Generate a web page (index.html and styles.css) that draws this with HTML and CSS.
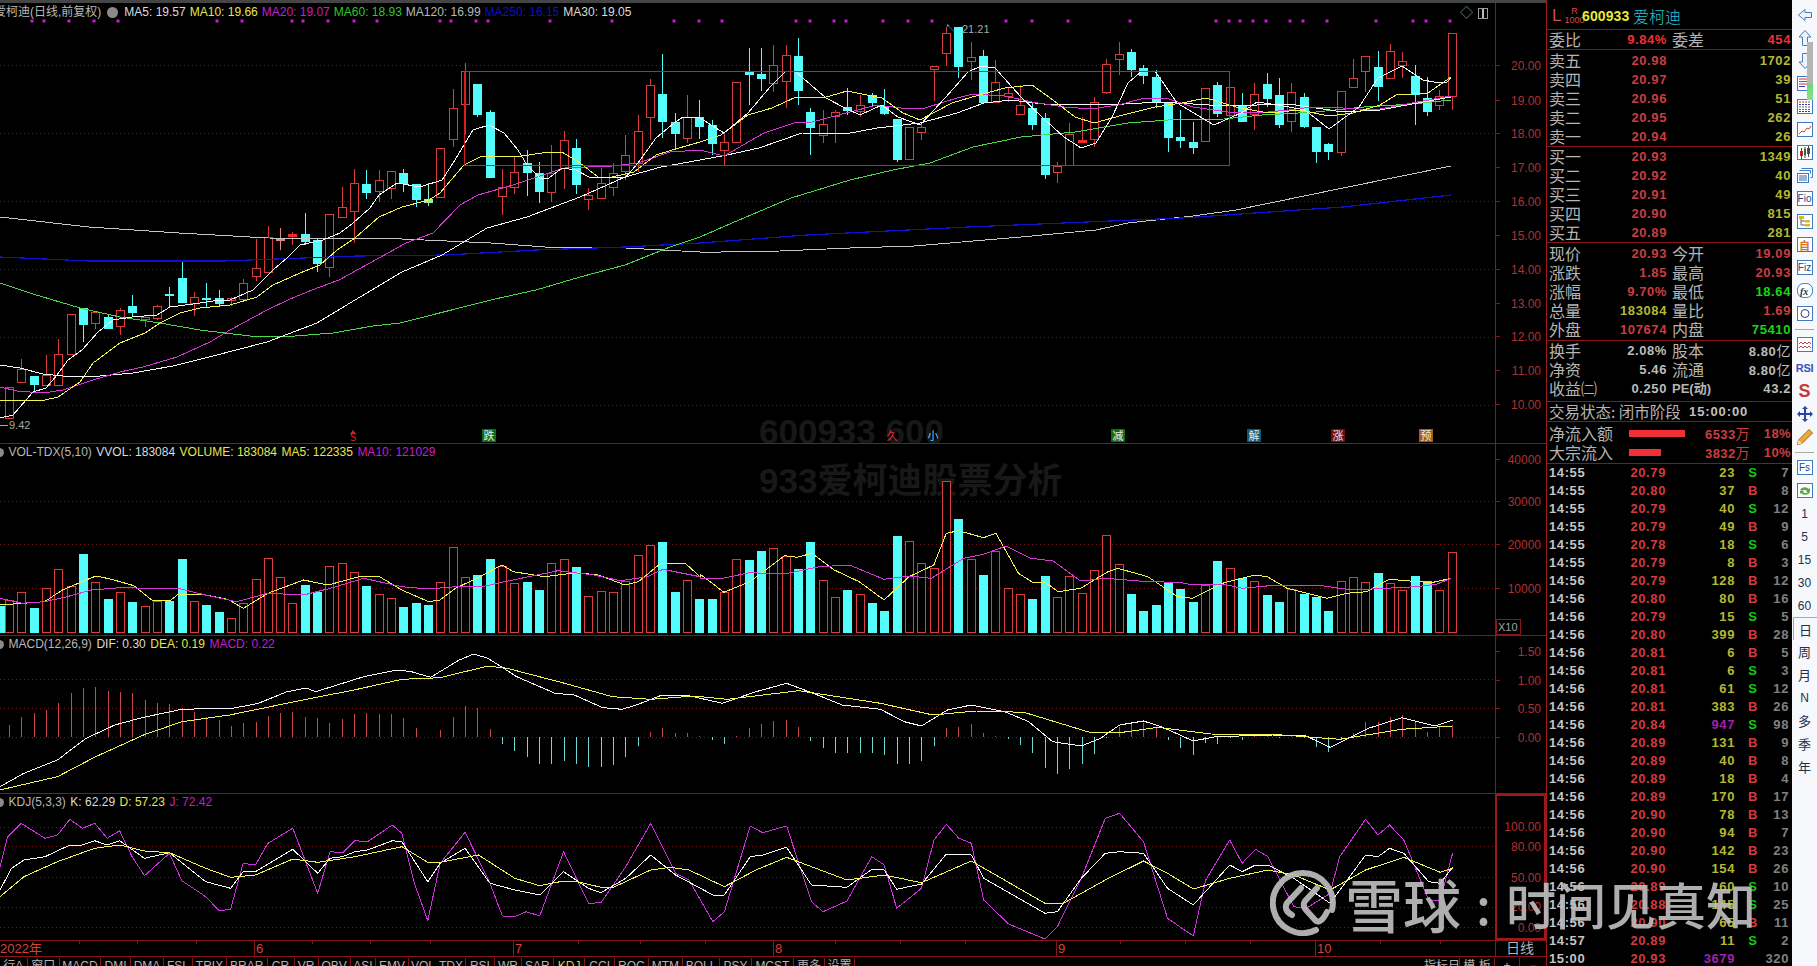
FILE: index.html
```html
<!DOCTYPE html>
<html lang="zh">
<head>
<meta charset="utf-8">
<title>600933 爱柯迪 日线</title>
<link rel="stylesheet" href="styles.css">
</head>
<body>
<div class="terminal">
  <div class="ghost"><div>600933 600</div><div>933爱柯迪股票分析</div></div>

  <section class="chart">
    <div class="topbar"></div>

    <div class="panel panel-main">
      <svg id="main" class="plot" viewBox="0 3 1546 440"></svg>
      <div class="legend legend-main">
        <span class="gray stock">爱柯迪(日线,前复权)</span>
        <span class="dot"></span>
        <span class="white">MA5: 19.57</span>
        <span class="yellow">MA10: 19.66</span>
        <span class="magenta">MA20: 19.07</span>
        <span class="green">MA60: 18.93</span>
        <span class="gray">MA120: 16.99</span>
        <span class="blue">MA250: 16.15</span>
        <span class="white">MA30: 19.05</span>
      </div>
      <div class="corner-icons"><span class="diamond">◇</span><span class="mini-win"></span></div>
    </div>

    <div class="panel panel-vol">
      <svg id="vol" class="plot" viewBox="0 444 1546 191"></svg>
      <div class="legend legend-sub">
        <span class="dot dot-edge"></span>
        <span class="gray">VOL-TDX(5,10)</span>
        <span class="white">VVOL: 183084</span>
        <span class="yellow">VOLUME: 183084</span>
        <span class="yellow">MA5: 122335</span>
        <span class="magenta">MA10: 121029</span>
      </div>
    </div>

    <div class="panel panel-macd">
      <svg id="macd" class="plot" viewBox="0 636 1546 157"></svg>
      <div class="legend legend-sub">
        <span class="dot dot-edge"></span>
        <span class="gray">MACD(12,26,9)</span>
        <span class="white">DIF: 0.30</span>
        <span class="yellow">DEA: 0.19</span>
        <span class="magenta">MACD: 0.22</span>
      </div>
    </div>

    <div class="panel panel-kdj">
      <svg id="kdj" class="plot" viewBox="0 794 1546 146"></svg>
      <div class="legend legend-sub">
        <span class="dot dot-edge"></span>
        <span class="gray">KDJ(5,3,3)</span>
        <span class="white">K: 62.29</span>
        <span class="yellow">D: 57.23</span>
        <span class="magenta">J: 72.42</span>
      </div>
    </div>

    <div class="panel panel-date">
      <svg id="date" class="plot" viewBox="0 941 1546 15"></svg>
    </div>

    <nav class="tabbar">
      <div class="tabs">
        <span>行A</span><span>窗口</span><span>MACD</span><span>DMI</span><span>DMA</span><span>FSL</span><span>TRIX</span><span>BRAR</span><span>CR</span><span>VR</span><span>OBV</span><span>ASI</span><span>EMV</span><span>VOL-TDX</span><span>RSI</span><span>WR</span><span>SAR</span><span class="active">KDJ</span><span>CCI</span><span>ROC</span><span>MTM</span><span>BOLL</span><span>PSY</span><span>MCST</span><span>更多</span><span>设置</span>
      </div>
      <div class="tabs-right">
        <span class="t-a">指标日</span><span class="t-b">模 板</span><span class="t-c">+</span><span class="t-d">−</span>
      </div>
    </nav>
  </section>

  <aside class="quote">
    <header class="q-head">
      <span class="q-l">L</span>
      <span class="q-r"><i>R</i><i>1000</i></span>
      <span class="q-code">600933</span>
      <span class="q-name">爱柯迪</span>
    </header>

    <div class="q-sec sec-ratio">
      <div class="r"><b>委比</b><em class="red2">9.84%</em><b>委差</b><em class="red2">454</em></div>
    </div>

    <div class="q-sec sec-ask">
      <div class="r"><b>卖五</b><em class="red">20.98</em><b></b><em class="yel">1702</em></div>
      <div class="r"><b>卖四</b><em class="red">20.97</em><b></b><em class="yel">39</em></div>
      <div class="r"><b>卖三</b><em class="red">20.96</em><b></b><em class="yel">51</em></div>
      <div class="r"><b>卖二</b><em class="red">20.95</em><b></b><em class="yel">262</em></div>
      <div class="r"><b>卖一</b><em class="red">20.94</em><b></b><em class="yel">26</em></div>
    </div>

    <div class="q-sec sec-bid">
      <div class="r"><b>买一</b><em class="red">20.93</em><b></b><em class="yel">1349</em></div>
      <div class="r"><b>买二</b><em class="red">20.92</em><b></b><em class="yel">40</em></div>
      <div class="r"><b>买三</b><em class="red">20.91</em><b></b><em class="yel">49</em></div>
      <div class="r"><b>买四</b><em class="red">20.90</em><b></b><em class="yel">815</em></div>
      <div class="r"><b>买五</b><em class="red">20.89</em><b></b><em class="yel">281</em></div>
    </div>

    <div class="q-sec sec-stat">
      <div class="r"><b>现价</b><em class="red">20.93</em><b>今开</b><em class="red">19.09</em></div>
      <div class="r"><b>涨跌</b><em class="red">1.85</em><b>最高</b><em class="red">20.93</em></div>
      <div class="r"><b>涨幅</b><em class="red">9.70%</em><b>最低</b><em class="grn">18.64</em></div>
      <div class="r"><b>总量</b><em class="yel">183084</em><b>量比</b><em class="red">1.69</em></div>
      <div class="r"><b>外盘</b><em class="red">107674</em><b>内盘</b><em class="grn">75410</em></div>
    </div>

    <div class="q-sec sec-base">
      <div class="r"><b>换手</b><em class="wht">2.08%</em><b>股本</b><em class="wht">8.80<u>亿</u></em></div>
      <div class="r"><b>净资</b><em class="wht">5.46</em><b>流通</b><em class="wht">8.80<u>亿</u></em></div>
      <div class="r"><b>收益㈡</b><em class="wht">0.250</em><b class="pe">PE(动)</b><em class="wht">43.2</em></div>
    </div>

    <div class="q-sec sec-state">
      <span class="state-l">交易状态: 闭市阶段</span><span class="state-t">15:00:00</span>
    </div>

    <div class="q-sec sec-flow">
      <div class="f"><b>净流入额</b><span class="bar bar1"></span><em class="f-v">6533<u>万</u></em><em class="f-p">18%</em></div>
      <div class="f"><b>大宗流入</b><span class="bar bar2"></span><em class="f-v">3832<u>万</u></em><em class="f-p">10%</em></div>
    </div>

    <div class="ticks">
      <div class="t"><i>14:55</i><em>20.79</em><s>23</s><b class="S">S</b><u>7</u></div>
      <div class="t"><i>14:55</i><em>20.80</em><s>37</s><b class="B">B</b><u>8</u></div>
      <div class="t"><i>14:55</i><em>20.79</em><s>40</s><b class="S">S</b><u>12</u></div>
      <div class="t"><i>14:55</i><em>20.79</em><s>49</s><b class="B">B</b><u>9</u></div>
      <div class="t"><i>14:55</i><em>20.78</em><s>18</s><b class="S">S</b><u>6</u></div>
      <div class="t"><i>14:55</i><em>20.79</em><s>8</s><b class="B">B</b><u>3</u></div>
      <div class="t"><i>14:56</i><em>20.79</em><s>128</s><b class="B">B</b><u>12</u></div>
      <div class="t"><i>14:56</i><em>20.80</em><s>80</s><b class="B">B</b><u>16</u></div>
      <div class="t"><i>14:56</i><em>20.79</em><s>15</s><b class="S">S</b><u>5</u></div>
      <div class="t"><i>14:56</i><em>20.80</em><s>399</s><b class="B">B</b><u>28</u></div>
      <div class="t"><i>14:56</i><em>20.81</em><s>6</s><b class="B">B</b><u>5</u></div>
      <div class="t"><i>14:56</i><em>20.81</em><s>6</s><b class="S">S</b><u>3</u></div>
      <div class="t"><i>14:56</i><em>20.81</em><s>61</s><b class="S">S</b><u>12</u></div>
      <div class="t"><i>14:56</i><em>20.81</em><s>383</s><b class="B">B</b><u>26</u></div>
      <div class="t"><i>14:56</i><em>20.84</em><s class="big">947</s><b class="S">S</b><u>98</u></div>
      <div class="t"><i>14:56</i><em>20.89</em><s>131</s><b class="B">B</b><u>9</u></div>
      <div class="t"><i>14:56</i><em>20.89</em><s>40</s><b class="B">B</b><u>8</u></div>
      <div class="t"><i>14:56</i><em>20.89</em><s>18</s><b class="B">B</b><u>4</u></div>
      <div class="t"><i>14:56</i><em>20.89</em><s>170</s><b class="B">B</b><u>17</u></div>
      <div class="t"><i>14:56</i><em>20.90</em><s>78</s><b class="B">B</b><u>13</u></div>
      <div class="t"><i>14:56</i><em>20.90</em><s>94</s><b class="B">B</b><u>7</u></div>
      <div class="t"><i>14:56</i><em>20.90</em><s>142</s><b class="B">B</b><u>23</u></div>
      <div class="t"><i>14:56</i><em>20.90</em><s>154</s><b class="B">B</b><u>26</u></div>
      <div class="t"><i>14:56</i><em>20.89</em><s>60</s><b class="S">S</b><u>10</u></div>
      <div class="t"><i>14:56</i><em>20.88</em><s>145</s><b class="S">S</b><u>25</u></div>
      <div class="t"><i>14:56</i><em>20.90</em><s>65</s><b class="B">B</b><u>11</u></div>
      <div class="t"><i>14:57</i><em>20.89</em><s>11</s><b class="S">S</b><u>2</u></div>
      <div class="t"><i>15:00</i><em>20.93</em><s class="big">3679</s><b></b><u>320</u></div>
    </div>
  </aside>

  <div class="toolbar">
    <div class="scroll-thumb"></div>
    <div class="ti"><svg width="16" height="16" viewBox="0 0 16 16"><path class="ar" d="M1.5 8 8 2.5V5.5H14.5V10.5H8V13.5Z"/></svg></div>
    <div class="ti"><svg width="16" height="18" viewBox="0 0 16 18"><path class="ar" d="M8 1.5 14 8H10.5V16.5H5.5V8H2Z"/></svg></div>
    <div class="ti"><svg width="16" height="18" viewBox="0 0 16 18"><path class="ar" d="M8 16.5 14 10H10.5V1.5H5.5V10H2Z"/></svg></div>
    <div class="ti"><svg width="18" height="16" viewBox="0 0 18 16"><rect class="bx" x="1.5" y=".5" width="15" height="14"/><path d="M3 3h12" stroke="#c33"/><path d="M3 5.500h12" stroke="#383"/><path d="M3 8h8" stroke="#c33"/><path d="M3 10.500h6" stroke="#33c"/><path d="M10 8l6 6-3 1z" fill="#9ab"/></svg></div>
    <div class="ti"><svg width="18" height="16" viewBox="0 0 18 16"><rect class="bx" x="1.500" y=".5" width="15" height="14"/><path d="M3 3h12" stroke="#c33" stroke-dasharray="2 1"/><path d="M3 5.500h12" stroke="#33c" stroke-dasharray="2 1"/><path d="M3 8h12" stroke="#383" stroke-dasharray="2 1"/><path d="M3 10.500h12" stroke="#c33" stroke-dasharray="2 1"/><path d="M3 12.500h12" stroke="#33c" stroke-dasharray="2 1"/></svg></div>
    <div class="ti"><svg width="18" height="16" viewBox="0 0 18 16"><rect class="bx" x="1.500" y=".5" width="15" height="14"/><path d="M3 12l3-3 2 1 3-4 2 1 2-3" fill="none" stroke="#c44"/></svg></div>
    <div class="ti"><svg width="18" height="16" viewBox="0 0 18 16"><rect class="bx" x="1.500" y=".5" width="15" height="14"/><rect x="4" y="6" width="3" height="5" fill="#c22"/><rect x="8" y="4" width="2" height="6" fill="#282"/><rect x="11" y="3" width="3" height="6" fill="#c22"/><path d="M5.500 3v11M9 2v11M12.500 1v11" stroke="#444"/></svg></div>
    <div class="ti"><svg width="18" height="16" viewBox="0 0 18 16"><path class="bx" d="M5.500.5h11v9h-2M3.500 2.500h11v3"/><rect class="bx" x="1.500" y="5.500" width="11" height="9"/><path d="M3 8h8M3 10h8M3 12h8" stroke="#36a"/></svg></div>
    <div class="ti"><span class="tbox">Fio</span></div>
    <div class="ti"><svg width="18" height="16" viewBox="0 0 18 16"><rect class="bx" x="1.500" y=".5" width="15" height="14"/><path d="M5 4v7h4M5 7h4" fill="none" stroke="#666"/><rect x="3" y="2" width="5" height="3" fill="#e6b422"/><rect x="9" y="6" width="5" height="2.500" fill="#e6b422"/><rect x="9" y="10" width="5" height="2.500" fill="#e6b422"/></svg></div>
    <div class="ti"><span class="tbox tbox-cn">自</span></div>
    <div class="ti"><span class="tbox">Fiz</span></div>
    <div class="ti"><svg width="18" height="16" viewBox="0 0 18 16"><rect class="bx" x="1.500" y=".5" width="15" height="14" rx="6"/><text class="fx" x="4" y="12">fx</text></svg></div>
    <div class="ti"><svg width="18" height="16" viewBox="0 0 18 16"><rect class="bx" x="1.500" y=".5" width="15" height="14"/><circle cx="9" cy="7.500" r="4" fill="none" stroke="#346"/></svg></div>
    <div class="tsep"></div>
    <div class="ti"><svg width="18" height="16" viewBox="0 0 18 16"><rect class="bx" x="1.500" y=".5" width="15" height="14"/><path d="M3 7l2-2 2 2 2-2 2 2 2-2 2 2M3 11l2-2 2 2 2-2 2 2 2-2 2 2" fill="none" stroke="#c44"/></svg></div>
    <div class="ti"><span class="rsi">RSI</span></div>
    <div class="ti"><span class="dollar">S</span></div>
    <div class="ti"><svg width="18" height="18" viewBox="0 0 18 18"><path d="M9 1l3 3h-2v4h4V6l3 3-3 3v-2h-4v4h2l-3 3-3-3h2v-4H4v2L1 9l3-3v2h4V4H6z" fill="#2346a8"/></svg></div>
    <div class="ti"><svg width="18" height="18" viewBox="0 0 18 18"><path d="M13 1.500l3.500 3.500L6 15.500 1.500 16.500 2.500 12Z" fill="#e9a93c" stroke="#a06a18"/><path d="M1.500 16.500l1-4.500 3.500 3.500Z" fill="#f2dcb0"/></svg></div>
    <div class="tsep"></div>
    <div class="ti"><span class="tbox">Fs</span></div>
    <div class="ti"><svg width="18" height="16" viewBox="0 0 18 16"><rect class="bx" x="1.500" y=".5" width="15" height="14"/><path d="M4 7a5 4 0 0 1 9-1l1-1v4h-4l1-1a3 2 0 0 0-5 0zM14 9a5 4 0 0 1-9 1l-1 1V8h4l-1 1a3 2 0 0 0 5 0z" fill="#5aa84a"/></svg></div>
    <div class="ti num">1</div>
    <div class="ti num">5</div>
    <div class="ti num">15</div>
    <div class="ti num">30</div>
    <div class="ti num">60</div>
    <div class="ti cyc cyc-on">日</div>
    <div class="ti cyc">周</div>
    <div class="ti cyc">月</div>
    <div class="ti num">N</div>
    <div class="ti cyc">多</div>
    <div class="ti cyc">季</div>
    <div class="ti cyc">年</div>
  </div>

  <div class="watermark" aria-label="雪球：时间见真知">
    <svg class="wm-logo" width="66" height="66" viewBox="0 0 66 66">
      <path class="wm-ring" d="M46 60A30 30 0 1 1 62 40"/>
      <path class="wm-ring" d="M22 45 Q13 40 17 33 L31 18"/>
      <path class="wm-ring" d="M47 18 L35 31 Q32 35 36 40 L46 51 Q51 54 57 42"/>
    </svg>
    <span class="wm-a">雪球</span><span class="wm-c">:</span><span class="wm-b">时间见真知</span>
  </div>
</div>
<script src="script.js"></script>
</body>
</html>
```

FILE: styles.css
```css
* { box-sizing: border-box; }
html, body { margin: 0; padding: 0; height: 966px; overflow: hidden; background: #000; }
body { font-family: "Liberation Sans", "Noto Sans CJK SC", sans-serif; color: #c0c0c0; }

.terminal { display: flex; width: 1817px; height: 966px; overflow: hidden; position: relative; background: #000; }

/* ---------- chart column ---------- */
.chart { width: 1546px; flex: none; display: flex; flex-direction: column; position: relative; }
.topbar { height: 3px; background: #454545; flex: none; }
.panel { position: relative; flex: none; }
.panel-main { height: 441px; border-bottom: 1px solid #8e1515; }
.panel-vol  { height: 192px; border-bottom: 1px solid #8e1515; }
.panel-macd { height: 158px; border-bottom: 1px solid #8e1515; }
.panel-kdj  { height: 147px; border-bottom: 1px solid #8e1515; }
.panel-date { height: 16px;  border-bottom: 1px solid #8e1515; }
.plot { display: block; width: 1546px; height: 100%; }

.legend { position: absolute; display: flex; font-size: 12px; line-height: 14px; white-space: nowrap; align-items: center; }
.legend-main { top: 2px; left: -6px; gap: 4px; }
.legend-sub { top: 1px; left: -5px; gap: 4.5px; }
.white { color: #dcdcdc; }
.gray { color: #b8b8b8; }
.yellow { color: #e6e650; }
.magenta { color: #c81ec8; }
.green { color: #2ec82e; }
.blue { color: #1010c0; }
.dot { width: 11px; height: 11px; margin: 0 2px; border-radius: 50%; background: #8a8a8a; flex: none; }
.dot-edge { width: 9px; height: 9px; margin: 0; }

.corner-icons { position: absolute; top: 3px; left: 1460px; display: flex; align-items: center; gap: 5px; color: #8c8c8c; font-size: 13px; line-height: 14px; }
.mini-win { width: 10px; height: 11px; border: 1px solid #9a9a9a; background: linear-gradient(90deg, #000 40%, #bbb 40%, #bbb 60%, #000 60%); }

.ghost { position: absolute; left: 759px; top: 407px; width: 320px; font-size: 35px; line-height: 49px; font-weight: 700; color: #181818; }

/* SVG classes */
.grid { stroke: #701414; stroke-width: 1; stroke-dasharray: 1 3; }
.sep { stroke: #8e1515; stroke-width: 1; shape-rendering: crispEdges; }
.sep-b { stroke: #a01818; stroke-width: 2; fill: none; shape-rendering: crispEdges; }
.sep-thin { stroke: #8e1515; stroke-width: 1; fill: none; shape-rendering: crispEdges; }
.note-line { stroke: #a8a8a8; stroke-width: 1; }
.ax { fill: #b23030; font: 12px "Liberation Sans", sans-serif; text-anchor: end; }
.bodyr { fill: #000; stroke: #d83c3c; shape-rendering: crispEdges; }
.bodyf { fill: #ee2c2c; stroke: #ee2c2c; shape-rendering: crispEdges; }
.bodyp { fill: #d88; stroke: #d88; shape-rendering: crispEdges; }
.bodyc { fill: #54fcfc; stroke: #54fcfc; shape-rendering: crispEdges; }
.bodyg { fill: #8cf0b0; stroke: #8cf0b0; shape-rendering: crispEdges; }
.wr { stroke: #d83c3c; shape-rendering: crispEdges; }
.wc { stroke: #54fcfc; shape-rendering: crispEdges; }
.wg { stroke: #8cf0b0; shape-rendering: crispEdges; }
.wp { stroke: #d88; shape-rendering: crispEdges; }
.hr { stroke: #c84848; shape-rendering: crispEdges; }
.hc { stroke: #6cd8d8; shape-rendering: crispEdges; }
.l { fill: none; stroke-linejoin: round; shape-rendering: crispEdges; }
.ma5 { stroke: #f8f8f8; stroke-width: 1; }
.ma10 { stroke: #f4f450; stroke-width: 1; }
.ma20 { stroke: #d838d8; stroke-width: 1; }
.ma30 { stroke: #f8f8f8; stroke-width: 1; }
.ma60 { stroke: #48d848; stroke-width: 1; }
.ma120 { stroke: #c8c8c8; stroke-width: 1; }
.ma250 { stroke: #1010d0; stroke-width: 1.2; }
.kj { stroke: #d030e0; stroke-width: 1; }
.rect { fill: none; stroke: #d81c1c; stroke-width: 1.2; shape-rendering: crispEdges; }
.flash { stroke: #f01818; stroke-width: 1; shape-rendering: crispEdges; }
.pdot { fill: #c81ed0; }
.note { fill: #a8a8a8; font: 11px "Liberation Sans", sans-serif; }
.sig { font: 11px "Noto Sans CJK SC", sans-serif; text-anchor: middle; }
.date { fill: #d84040; font: 13px "Liberation Sans", "Noto Sans CJK SC", sans-serif; }
.dateg { fill: #b0b0b0; font: 14px "Noto Sans CJK SC", sans-serif; text-anchor: middle; }
.x10 { fill: #a0a0a0; font: 11px "Liberation Sans", sans-serif; }

/* tab bar */
.tabbar { flex: 1; display: flex; justify-content: space-between; font-size: 12px; line-height: 16px; color: #b4b4b4; overflow: hidden; padding-top: 1px; }
.tabs { display: grid; grid-template-columns: 27.5px 32.5px 41px 30px 33px 29px 34px 40.5px 27px 24px 32.4px 25px 33px 57px 29px 27px 32px 31.6px 29.4px 34px 34px 37.5px 31.5px 42px 31.5px 29.5px; height: 24px; }
.tabs span { text-align: center; border-right: 1px solid #8e1515; white-space: nowrap; overflow: hidden; }
.tabs span.active { color: #d8d830; }
.tabs-right { display: grid; grid-template-columns: 36px 35px 25px 26px; width: 122px; height: 24px; }
.tabs-right span { text-align: center; border-right: 1px solid #8e1515; white-space: nowrap; }
.tabs-right .t-d { border-right: 0; }

/* ---------- quote column ---------- */
.quote { width: 246px; flex: none; border-left: 1px solid #a01818; display: flex; flex-direction: column; font-size: 13px; }
.q-head { height: 27px; margin-top: 3px; border-bottom: 1px solid #8e1515; display: flex; align-items: center; padding-left: 5px; flex: none; }
.q-l { color: #d84848; font-size: 17px; line-height: 26px; width: 15px; }
.q-r { display: flex; flex-direction: column; color: #d84848; font-size: 9px; line-height: 9px; width: 15px; align-items: center; }
.q-r i { font-style: normal; }
.q-code { color: #e8e838; font-size: 14px; font-weight: 700; letter-spacing: .1px; width: 51px; }
.q-name { color: #26c8d8; font-size: 16px; line-height: 22px; font-family: "Noto Sans CJK SC", sans-serif; font-weight: 300; }

.q-sec { border-bottom: 1px solid #8e1515; flex: none; }
.sec-ratio { height: 20px; }
.sec-ask { height: 97px; padding-top: 1px; }
.sec-bid { height: 96px; }
.sec-stat { height: 98px; padding-top: 1px; }
.sec-base { height: 61px; }
.sec-state { height: 20px; display: flex; align-items: center; padding-left: 2px; white-space: nowrap; }
.sec-flow { height: 42px; padding-top: 2px; }

.r { display: grid; grid-template-columns: 40px 78px 45px 1fr; height: 19px; line-height: 19px; padding: 0 1px 0 2px; white-space: nowrap; }
.r b, .f b { font: 400 16px/19px "Noto Sans CJK SC", sans-serif; color: #b4b4b4; }
.r b:nth-child(3) { padding-left: 5px; }
.r b.pe { font-family: "Liberation Sans", "Noto Sans CJK SC", sans-serif; font-size: 13px; font-weight: 700; }
.r em { font: 700 13px/19px "Liberation Sans", "Noto Sans CJK SC", sans-serif; text-align: right; letter-spacing: .6px; }
.r u, .f u { text-decoration: none; font-weight: 400; font-size: 14px; font-family: "Noto Sans CJK SC", sans-serif; }
.red { color: #cc3c40; }
.red2 { color: #ee3034; }
.yel { color: #b4b830; }
.grn { color: #14d814; }
.wht { color: #bcbcbc; }

.state-l { font: 400 15.5px/19px "Noto Sans CJK SC", sans-serif; color: #b4b4b4; width: 140px; }
.state-t { font: 700 13px/19px "Liberation Sans", sans-serif; color: #c0c0c0; letter-spacing: .9px; }

.f { display: flex; height: 19px; align-items: center; padding: 0 1px 0 2px; white-space: nowrap; }
.f b { width: 80px; }
.bar { height: 7px; background: #f03034; flex: none; }
.bar1 { width: 56px; }
.bar2 { width: 32px; margin-right: 24px; }
.f em { font: 700 13px/19px "Liberation Sans", sans-serif; color: #cc3c40; text-align: right; letter-spacing: .4px; }
.f-v { width: 65px; }
.f-p { flex: 1; }

.t { display: grid; grid-template-columns: 38px 79px 69px 30px 1fr; height: 18px; padding: 0 3px 0 2px; font: 700 13px/18px "Liberation Sans", sans-serif; letter-spacing: .6px; }
.t i { font-style: normal; color: #c4c4c4; }
.t em { font-style: normal; color: #d43a3e; text-align: right; }
.t s { text-decoration: none; color: #b4b830; text-align: right; }
.t s.big { color: #a020b0; }
.t b { text-align: center; padding-left: 6px; }
.t .S { color: #18c818; }
.t .B { color: #d43a3e; }
.t u { text-decoration: none; color: #808080; text-align: right; }

/* ---------- toolbar ---------- */
.toolbar { flex: 1; background: #f6f8fb; padding-top: 3px; position: relative; display: flex; flex-direction: column; align-items: stretch; }
.ti { height: 23px; flex: none; display: flex; align-items: center; justify-content: center; position: relative; }
.tsep { height: 8px; flex: none; margin: 0 3px; background: linear-gradient(#aaa, #aaa) center/100% 1px no-repeat; }
.scroll-thumb { position: absolute; right: 4px; top: 42px; width: 6px; height: 58px; background: linear-gradient(#b4b4b4 0, #b4b4b4 72%, #6ed66e 72%, #8ae08a 100%); z-index: 2; }
.ar { fill: #eef4fb; stroke: #4a7cb8; stroke-width: 1; }
.bx { fill: #fff; stroke: #3d7cc4; stroke-width: 1; }
.fx { font: italic 700 10px "Liberation Serif", serif; fill: #234; }
.tbox { border: 1px solid #3d7cc4; height: 15px; width: 16px; display: flex; align-items: center; justify-content: center; font-size: 10px; color: #234a90; background: #fff; }
.tbox-cn { color: #d8732a; font: 700 11px "Noto Sans CJK SC", sans-serif; }
.rsi { font-size: 11px; font-weight: 700; color: #3c50b8; letter-spacing: -.3px; }
.dollar { font-size: 18px; font-weight: 700; color: #c83838; line-height: 18px; }
.num { font-size: 12px; color: #24304a; }
.cyc { font: 400 13px "Noto Sans CJK SC", sans-serif; color: #24304a; }
.cyc-on { border-left: 1px solid #a8a8a8; border-top: 1px solid #a8a8a8; margin-left: 1px; }

/* ---------- watermark ---------- */
.watermark { position: absolute; left: 1270px; top: 870px; display: flex; align-items: center; height: 66px; color: #bcbcbc; opacity: .93; z-index: 5; font-family: "Noto Sans CJK SC", sans-serif; font-weight: 500; white-space: nowrap; }
.wm-logo { flex: none; }
.wm-ring { fill: none; stroke: #bcbcbc; stroke-width: 6; stroke-linecap: round; stroke-linejoin: round; }
.wm-a { font-size: 58px; line-height: 66px; margin-left: 9px; }
.wm-c { font-size: 50px; line-height: 66px; width: 45px; text-align: center; }
.wm-b { font-size: 50px; line-height: 66px; }
```

FILE: script.js
```js
// x position of candle i, in page pixels
var X = function (i) { return Math.round(8.9 + 12.33 * i); };

// type, body top, body bottom, wick top, wick bottom (page y)
var candles = [
['r',387,418,387,418],['r',369,382,359,383],['c',376,384,376,391],['r',375,385,355,386],['r',354,385,339,385],
['r',314,354,314,354],['c',308,324,308,342],['r',312,323,312,329],['c',317,328,315,328],['r',310,326,308,335],
['c',306,312,295,316],['r',317,319,315,327],['r',306,318,305,320],['c',294,294,287,308],['c',278,302,262,302],
['r',297,303,292,316],['c',298,298,283,308],['c',298,303,290,307],['r',298,300,297,306],['r',283,299,279,302],
['r',268,276,239,281],['r',237,272,226,272],['p',239,240,228,250],['f',234,236,232,245],['c',234,241,213,245],
['c',240,263,238,272],['r',214,267,214,277],['r',207,217,187,217],['r',183,211,169,243],['c',184,192,170,199],
['r',180,191,170,202],['r',171,188,171,199],['c',173,183,169,192],['c',184,199,184,207],['g',199,202,183,206],
['r',148,197,148,197],['r',108,139,89,147],['r',71,104,63,135],['c',84,114,84,117],['c',112,177,110,177],
['r',187,196,169,215],['r',172,187,157,194],['c',163,172,150,196],['c',173,191,162,203],['r',173,192,145,202],
['r',140,168,131,189],['c',148,184,139,194],['r',195,199,188,210],['r',183,198,168,198],['r',173,187,163,196],
['r',155,171,135,180],['r',131,163,115,172],['r',85,117,79,140],['c',94,121,54,138],['c',122,133,113,150],
['r',117,138,95,143],['c',117,126,100,139],['c',125,143,120,155],['r',142,150,132,165],['r',82,142,82,142],
['c',71,74,48,105],['c',74,78,48,91],['r',65,83,45,92],['r',55,81,45,108],['c',56,90,38,105],
['c',112,127,108,155],['r',124,135,110,143],['r',112,116,110,143],['c',107,110,88,115],['r',105,111,95,117],
['c',95,102,93,107],['c',106,113,89,115],['c',119,159,119,162],['r',127,159,127,159],['r',127,132,122,140],
['r',66,69,66,101],['r',33,53,27,66],['c',27,66,27,78],['r',57,61,42,80],['c',56,102,50,102],
['r',82,102,60,102],['r',93,96,88,102],['r',105,114,85,115],['c',108,124,102,130],['c',118,174,113,179],
['r',166,172,162,183],['r',134,165,123,165],['f',140,142,117,142],['r',102,139,97,147],['r',64,92,59,94],
['r',54,59,42,75],['c',52,69,49,77],['c',68,75,65,84],['c',77,102,70,108],['c',102,137,102,152],
['c',137,140,110,148],['c',142,147,122,154],['r',88,141,88,141],['c',85,113,82,117],['r',87,115,87,115],
['c',106,121,93,122],['r',94,114,83,130],['c',84,98,73,107],['c',95,124,78,128],['r',92,121,83,132],
['c',97,126,93,128],['c',127,151,127,163],['c',144,151,143,160],['r',91,152,91,156],['r',78,87,59,88],
['r',56,71,56,92],['c',67,86,51,101],['r',51,78,44,78],['r',61,65,52,78],['c',76,94,65,125],
['c',98,111,77,116],['r',96,105,90,110],['r',33,96,33,110]
];

// volume bar tops, read per section
var volA = [540,517,564,505,448,498,402,487,537,517,546,559,544,543,417,544,555,576,595,550,478,415,472,550,495,517,438,430,457,498,523,535,561,549,555,487,382,472,465,417,438,489,485,510,430,418,441,529,514,517,482,406,376,366,516,481]
  .map(function (y) { return 420 + y / 3; });
var volB = [387,387,365,268,270,243,235,258,298,216,331,382,360,373,400,423,198,213,280,295,33,147,268,315,244,355,373,387,318,382,319,370,301,196,283,372,423,405,340,357,396,345,273,295,324,334,375,396,358,372,381,423,334,322,337,309,340,361,318,334,361,247]
  .map(function (y) { return 470 + y / 3; });
var vols = volA.concat(volB);

var hist = [255,232,220,210,190,158,143,140,152,155,160,180,190,192,205,215,230,240,258,248,245,228,218,215,230,235,250,237,222,220,222,222,235,265,290,270,232,198,205,268,312,333,350,372,372,362,372,380,380,375,352,318,275,265,280,278,288,300,312,288,263,252,242,240,260,302,325,338,338,338,338,345,372,372,362,318,265,262,253,280,288,297,315,340,385,402,388,372,342,295,262,250,250,265,300,325,345,310,312,295,300,285,285,295,288,295,320,337,300,280,245,245,232,225,245,275,262,255];

function toPage(list, ox, sx, oy, sy) {
  return list.map(function (p) { return [ox + p[0] / sx, oy + p[1] / sy]; });
}

var mains = {
 ma120: [[0,217],[89,227],[179,233],[268,238],[402,239],[491,243],[545,247],[607,247],[700,252],[721,252],[780,251],[850,248],[914,246],[1021,237],[1096,230],[1128,223],[1193,216],[1236,210],[1343,188],[1407,175],[1451,166]],
 ma250: [[0,257],[89,261],[223,261],[357,256],[446,255],[536,250],[625,247],[700,243],[807,235],[968,227],[1182,218],[1343,207],[1451,195]],
 ma60: [[0,283],[33,294],[80,308],[120,317],[160,323],[200,330],[250,336],[283,337],[333,333],[373,326],[400,323],[495,299],[536,290],[580,277],[625,265],[670,247],[700,237],[732,223],[791,198],[850,180],[893,170],[930,163],[973,147],[1021,137],[1075,132],[1128,123],[1182,119],[1214,120],[1262,115],[1316,112],[1364,107],[1412,104],[1451,100]],
 ma30: [[0,365],[20,368],[43,374],[63,376],[100,376],[133,373],[173,366],[213,356],[267,342],[317,323],[350,303],[402,272],[442,255],[487,228],[527,217],[580,197],[625,177],[661,167],[700,160],[727,155],[759,148],[802,133],[845,134],[877,128],[920,123],[957,113],[984,103],[1011,100],[1043,104],[1107,105],[1160,102],[1225,106],[1289,104],[1343,112],[1380,110],[1412,104],[1451,97]],
 ma20: [[0,387],[17,391],[43,393],[63,390],[93,380],[120,372],[143,367],[177,357],[210,342],[230,330],[267,310],[290,299],[312,290],[339,280],[379,258],[406,243],[433,233],[460,205],[478,195],[513,185],[549,173],[565,168],[612,166],[638,163],[670,152],[700,150],[724,156],[764,133],[794,123],[812,122],[850,112],[877,105],[909,109],[925,108],[957,98],[973,94],[1005,96],[1032,102],[1064,107],[1091,109],[1118,105],[1145,98],[1166,98],[1193,107],[1228,112],[1257,113],[1289,110],[1311,107],[1343,108],[1375,110],[1412,103],[1451,96]],
 ma10: [[0,400],[45,400],[58,397],[80,382],[93,363],[120,343],[145,333],[160,323],[180,313],[200,308],[230,305],[257,297],[273,285],[300,273],[320,265],[337,250],[355,238],[379,217],[402,207],[429,200],[440,193],[464,165],[482,156],[522,156],[549,152],[562,152],[580,163],[598,177],[612,177],[634,172],[656,155],[679,148],[700,142],[721,135],[748,115],[772,108],[796,97],[823,98],[847,91],[882,98],[903,113],[920,120],[952,103],[979,95],[1005,88],[1032,85],[1053,100],[1075,117],[1094,123],[1123,115],[1155,107],[1182,103],[1206,98],[1236,107],[1268,113],[1300,110],[1329,116],[1353,113],[1380,105],[1396,95],[1428,93],[1451,77]],
 ma5: [[0,418],[13,415],[33,392],[46,388],[57,375],[68,360],[82,350],[98,332],[113,320],[132,317],[157,315],[170,307],[193,304],[213,301],[230,300],[253,290],[273,270],[287,258],[300,245],[323,240],[340,233],[353,223],[370,208],[379,195],[397,183],[420,187],[442,180],[455,160],[473,130],[489,125],[504,133],[518,150],[527,165],[540,178],[549,178],[562,168],[576,170],[589,177],[612,177],[625,178],[638,163],[656,138],[674,123],[683,117],[700,118],[724,133],[748,113],[770,87],[786,71],[796,72],[826,98],[845,108],[860,115],[882,105],[898,117],[920,125],[946,97],[968,72],[981,66],[995,68],[1021,97],[1043,118],[1064,137],[1081,148],[1096,143],[1112,117],[1128,83],[1142,71],[1155,71],[1177,103],[1214,125],[1241,113],[1257,102],[1278,105],[1305,110],[1329,129],[1359,107],[1378,78],[1402,66],[1423,80],[1434,82],[1447,82],[1451,78]]
};

var volY = toPage([[0,555],[100,545],[140,510],[175,490],[215,468],[250,478],[300,497],[340,540],[380,543],[400,522],[450,522],[510,538],[545,565],[600,520],[680,480],[735,495],[810,468],[850,470],[900,510],[960,545],[985,540],[1020,505],[1060,480],[1125,435],[1150,455],[1220,470],[1290,458],[1340,465],[1400,495],[1430,485],[1480,430],[1535,430],[1568,470]],0,2.24,420,3)
  .concat(toPage([[0,312],[48,367],[100,335],[170,257],[195,262],[225,250],[270,300],[320,335],[370,390],[420,320],[470,285],[495,190],[520,182],[570,203],[595,190],[640,310],[670,338],[695,338],[720,365],[765,355],[820,305],[840,295],[900,320],[960,380],[990,385],[1050,340],[1115,315],[1140,320],[1180,355],[1260,385],[1300,370],[1340,365],[1385,328],[1470,338],[1510,325]],700,2.01,470,3));
var volM = toPage([[0,535],[50,550],[100,545],[150,530],[205,510],[280,502],[340,507],[400,505],[460,525],[530,545],[600,520],[680,525],[740,505],[815,475],[900,500],[960,507],[1020,500],[1080,500],[1130,485],[1250,452],[1330,465],[1390,482],[1450,470],[1485,448],[1568,470]],0,2.24,420,3)
  .concat(toPage([[0,325],[45,325],[100,308],[170,312],[240,290],[300,285],[370,328],[420,318],[465,325],[530,265],[570,253],[615,228],[665,265],[710,273],[765,333],[815,325],[900,335],[965,337],[990,345],[1050,342],[1090,355],[1160,345],[1240,345],[1310,360],[1440,350],[1480,343],[1510,325]],700,2.01,470,3));

var dif = toPage([[0,440],[25,400],[60,360],[90,295],[120,255],[150,232],[190,208],[245,204],[270,190],[300,155],[320,144],[330,155],[380,110],[415,90],[430,95],[450,112],[480,60],[495,42],[510,55],[540,110],[580,160],[600,165],[630,203],[650,208],[665,195],[690,167],[720,167],[755,190],[790,155],[822,130],[850,160],[880,195],[920,208],[945,245],[963,258],[990,210],[1015,195],[1050,215],[1075,245],[1100,305],[1130,318],[1150,295],[1170,255],[1195,243],[1215,262],[1247,303],[1270,290],[1330,285],[1365,288],[1390,322],[1430,265],[1465,233],[1500,258],[1518,240]],0,1.045,640,3);
var dea = toPage([[0,450],[30,430],[60,410],[100,350],[150,285],[190,245],[240,225],[320,178],[370,150],[420,118],[460,113],[510,78],[530,85],[590,130],[640,170],[680,178],[725,168],[760,178],[835,152],[920,190],[975,225],[1020,213],[1070,217],[1140,278],[1170,278],[1210,262],[1265,282],[1340,285],[1400,298],[1465,268],[1518,258]],0,1.045,640,3);

var kdjJ = toPage([[0,230],[8,140],[22,100],[47,145],[60,135],[73,88],[86,115],[99,100],[112,145],[125,122],[138,200],[151,257],[177,190],[190,272],[215,320],[229,362],[241,358],[254,220],[267,225],[280,160],[306,115],[320,220],[332,310],[345,185],[358,188],[371,152],[384,155],[410,105],[420,130],[433,280],[447,392],[460,220],[486,127],[512,280],[525,378],[538,380],[550,365],[564,378],[589,185],[615,340],[628,338],[654,230],[680,100],[706,250],[720,270],[745,395],[757,365],[784,108],[797,128],[822,108],[848,335],[860,365],[885,333],[911,200],[924,225],[937,355],[963,295],[976,150],[989,103],[1002,145],[1015,160],[1028,330],[1054,402],[1092,447],[1105,410],[1130,265],[1155,85],[1170,70],[1195,155],[1220,385],[1247,438],[1260,270],[1285,150],[1298,220],[1312,178],[1325,200],[1352,350],[1365,355],[1390,310],[1400,200],[1427,88],[1440,135],[1452,105],[1467,150],[1493,330],[1505,330],[1518,190]],0,1.045,790,3);
var kdjK = toPage([[0,300],[12,235],[25,210],[47,200],[73,165],[86,165],[99,152],[112,165],[125,152],[151,205],[177,188],[215,275],[241,295],[254,245],[267,245],[306,178],[332,250],[345,205],[358,200],[371,185],[384,180],[410,152],[420,155],[447,275],[460,220],[486,175],[512,280],[538,300],[564,315],[589,245],[615,295],[628,308],[654,265],[680,195],[706,255],[745,315],[757,315],[784,200],[797,195],[822,172],[848,285],[885,292],[911,238],[924,240],[937,298],[963,282],[989,192],[1015,195],[1028,265],[1092,370],[1105,365],[1130,265],[1155,190],[1170,185],[1195,190],[1220,295],[1247,345],[1285,225],[1298,245],[1312,225],[1325,225],[1352,265],[1390,340],[1427,195],[1440,200],[1452,175],[1467,190],[1493,275],[1505,280],[1518,232]],0,1.045,790,3);
var kdjD = toPage([[0,320],[25,260],[60,215],[99,175],[125,165],[151,183],[177,188],[215,235],[241,262],[267,255],[306,207],[332,217],[371,200],[420,170],[447,217],[460,217],[500,195],[538,265],[564,287],[589,273],[600,273],[628,292],[641,292],[680,240],[700,232],[720,240],[757,290],[790,240],[822,202],[885,270],[924,255],[963,278],[1015,213],[1092,340],[1110,342],[1155,270],[1195,213],[1220,250],[1247,297],[1285,265],[1325,240],[1352,255],[1390,300],[1427,240],[1467,202],[1505,247],[1518,235]],0,1.045,790,3);

function line(x1, y1, x2, y2, cls) { return '<line class="' + cls + '" x1="' + x1 + '" y1="' + y1 + '" x2="' + x2 + '" y2="' + y2 + '"/>'; }
function poly(pts, cls) { return '<polyline class="l ' + cls + '" points="' + pts.map(function (p) { return p[0].toFixed(1) + ',' + p[1].toFixed(1); }).join(' ') + '"/>'; }
function rect(x, y, w, h, cls) { return '<rect class="' + cls + '" x="' + x + '" y="' + y + '" width="' + w + '" height="' + h + '"/>'; }
function txt(x, y, s, cls, extra) { return '<text class="' + cls + '" x="' + x + '" y="' + y + '"' + (extra || '') + '>' + s + '</text>'; }
function tag(cx, bg, s) { return '<rect x="' + (cx - 7) + '" y="429" width="14" height="13" fill="' + bg + '"/>' + txt(cx, 440, s, 'sig', ' fill="#e8e8e8"'); }

function gridRows(ys) { return ys.map(function (y) { return line(0, y + .5, 1495, y + .5, 'grid'); }).join(''); }
function axis(labels, top, bottom) {
  var s = line(1495.5, top, 1495.5, bottom, 'sep');
  labels.forEach(function (l) {
    s += line(1496, l[1] + .5, 1500, l[1] + .5, 'sep');
    s += txt(1541, l[1] + 4.5, l[0], 'ax');
  });
  return s;
}

/* ------- main panel ------- */
(function () {
  var s = gridRows([65, 133, 201, 269, 337, 405]);
  var dots = [32,44,69,94,118,217,242,292,303,328,354,377,440,451,476,488,550,612,674,699,722,796,810,834,846,883,908,932,1006,1032,1068,1130,1216,1229,1240,1253,1266,1290,1303,1327,1376,1413,1426,1450];
  dots.forEach(function (x) { s += rect(x - 1.5, 19.5, 3, 3, 'pdot'); });

  candles.forEach(function (c, i) {
    var x = X(i), t = c[0];
    var wick = t === 'c' ? 'wc' : t === 'g' ? 'wg' : t === 'p' ? 'wp' : 'wr';
    var body = { r: 'bodyr', c: 'bodyc', g: 'bodyg', p: 'bodyp', f: 'bodyf' }[t];
    s += line(x + .5, c[3], x + .5, c[4], wick);
    s += rect(x - 3.5, c[1] + .5, 8, Math.max(c[2] - c[1], 1), body);
  });

  ['ma120','ma250','ma60','ma30','ma20','ma10','ma5'].forEach(function (k) { s += poly(mains[k], k); });

  s += rect(464.5, 71.5, 765, 94, 'rect');
  s += line(465.5, 71, 465.5, 135, 'flash') + line(1229.5, 78, 1229.5, 134, 'flash');

  s += txt(945, 32, '↖', 'note') + txt(962, 33, '21.21', 'note');
  s += line(0, 425.5, 8, 425.5, 'note-line') + txt(9, 429, '9.42', 'note');

  // signal tags
  s += txt(353, 441, 'S', 'sig', ' fill="#e02020" font-weight="700"');
  s += '<path d="M350 434h6l-3-4z" fill="#e02020"/>';
  s += tag(489, '#0c6e12', '跌');
  s += txt(892, 440, '久', 'sig', ' fill="#e03030"');
  s += txt(933, 440, '小', 'sig', ' fill="#70d0f0"');
  s += tag(1118, '#0c6e12', '减') + tag(1254, '#0c5a78', '解') + tag(1338, '#6e1010', '涨') + tag(1426, '#a85a10', '预');

  s += axis([['20.00',65],['19.00',100],['18.00',133],['17.00',167],['16.00',201],['15.00',235],['14.00',269],['13.00',303],['12.00',336],['11.00',370],['10.00',404]], 3, 443);
  document.getElementById('main').innerHTML = s;
})();

/* ------- volume panel ------- */
(function () {
  var s = gridRows([501, 544, 588]);
  s += rect(-3, 606, 7, 26, 'bodyc');
  vols.forEach(function (top, i) {
    var c = candles[i][0] === 'c' || candles[i][0] === 'g';
    s += rect(X(i) - 3.5, top + .5, 8, 632 - top, c ? 'bodyc' : 'bodyr');
  });
  s += poly(volY, 'ma10') + poly(volM, 'ma20');
  s += axis([['40000',459],['30000',501],['20000',544],['10000',588]], 444, 635);
  s += rect(1496.5, 619.5, 24, 15, 'sep-thin') + txt(1498, 631, 'X10', 'x10');
  document.getElementById('vol').innerHTML = s;
})();

/* ------- MACD panel ------- */
(function () {
  var s = gridRows([679, 708, 737]);
  hist.forEach(function (v, i) {
    var y = 640 + v / 3, x = X(i) + .5;
    s += line(x, 737, x, y, y < 736.5 ? 'hr' : 'hc');
  });
  s += poly(dif, 'ma5') + poly(dea, 'ma10');
  s += axis([['1.50',651],['1.00',680],['0.50',708],['0.00',737]], 636, 793);
  document.getElementById('macd').innerHTML = s;
})();

/* ------- KDJ panel ------- */
(function () {
  var s = gridRows([827, 846, 877, 907, 927]);
  s += poly(kdjJ, 'kj') + poly(kdjK, 'ma5') + poly(kdjD, 'ma10');
  s += '<rect class="sep-b" x="1496" y="795" width="49" height="144"/>';
  [['100.00',826],['80.00',846],['50.00',877],['20.00',906],['0.00',927]].forEach(function (l) {
    s += txt(1541, l[1] + 4.5, l[0], 'ax');
  });
  document.getElementById('kdj').innerHTML = s;
})();

/* ------- date axis ------- */
(function () {
  var s = txt(0, 953, '2022年', 'date');
  [[254,'6'],[513,'7'],[773,'8'],[1056,'9'],[1315,'10']].forEach(function (d) {
    s += line(d[0] + .5, 941, d[0] + .5, 956, 'sep') + txt(d[0] + 2, 953, d[1], 'date');
  });
  [79,137,196,312,370,430,578,640,705,835,900,965,1120,1185,1250,1380,1440].forEach(function (x) {
    s += line(x + .5, 941, x + .5, 944, 'sep');
  });
  s += line(1495.5, 941, 1495.5, 956, 'sep') + txt(1520, 953, '日线', 'dateg');
  document.getElementById('date').innerHTML = s;
})();
```
